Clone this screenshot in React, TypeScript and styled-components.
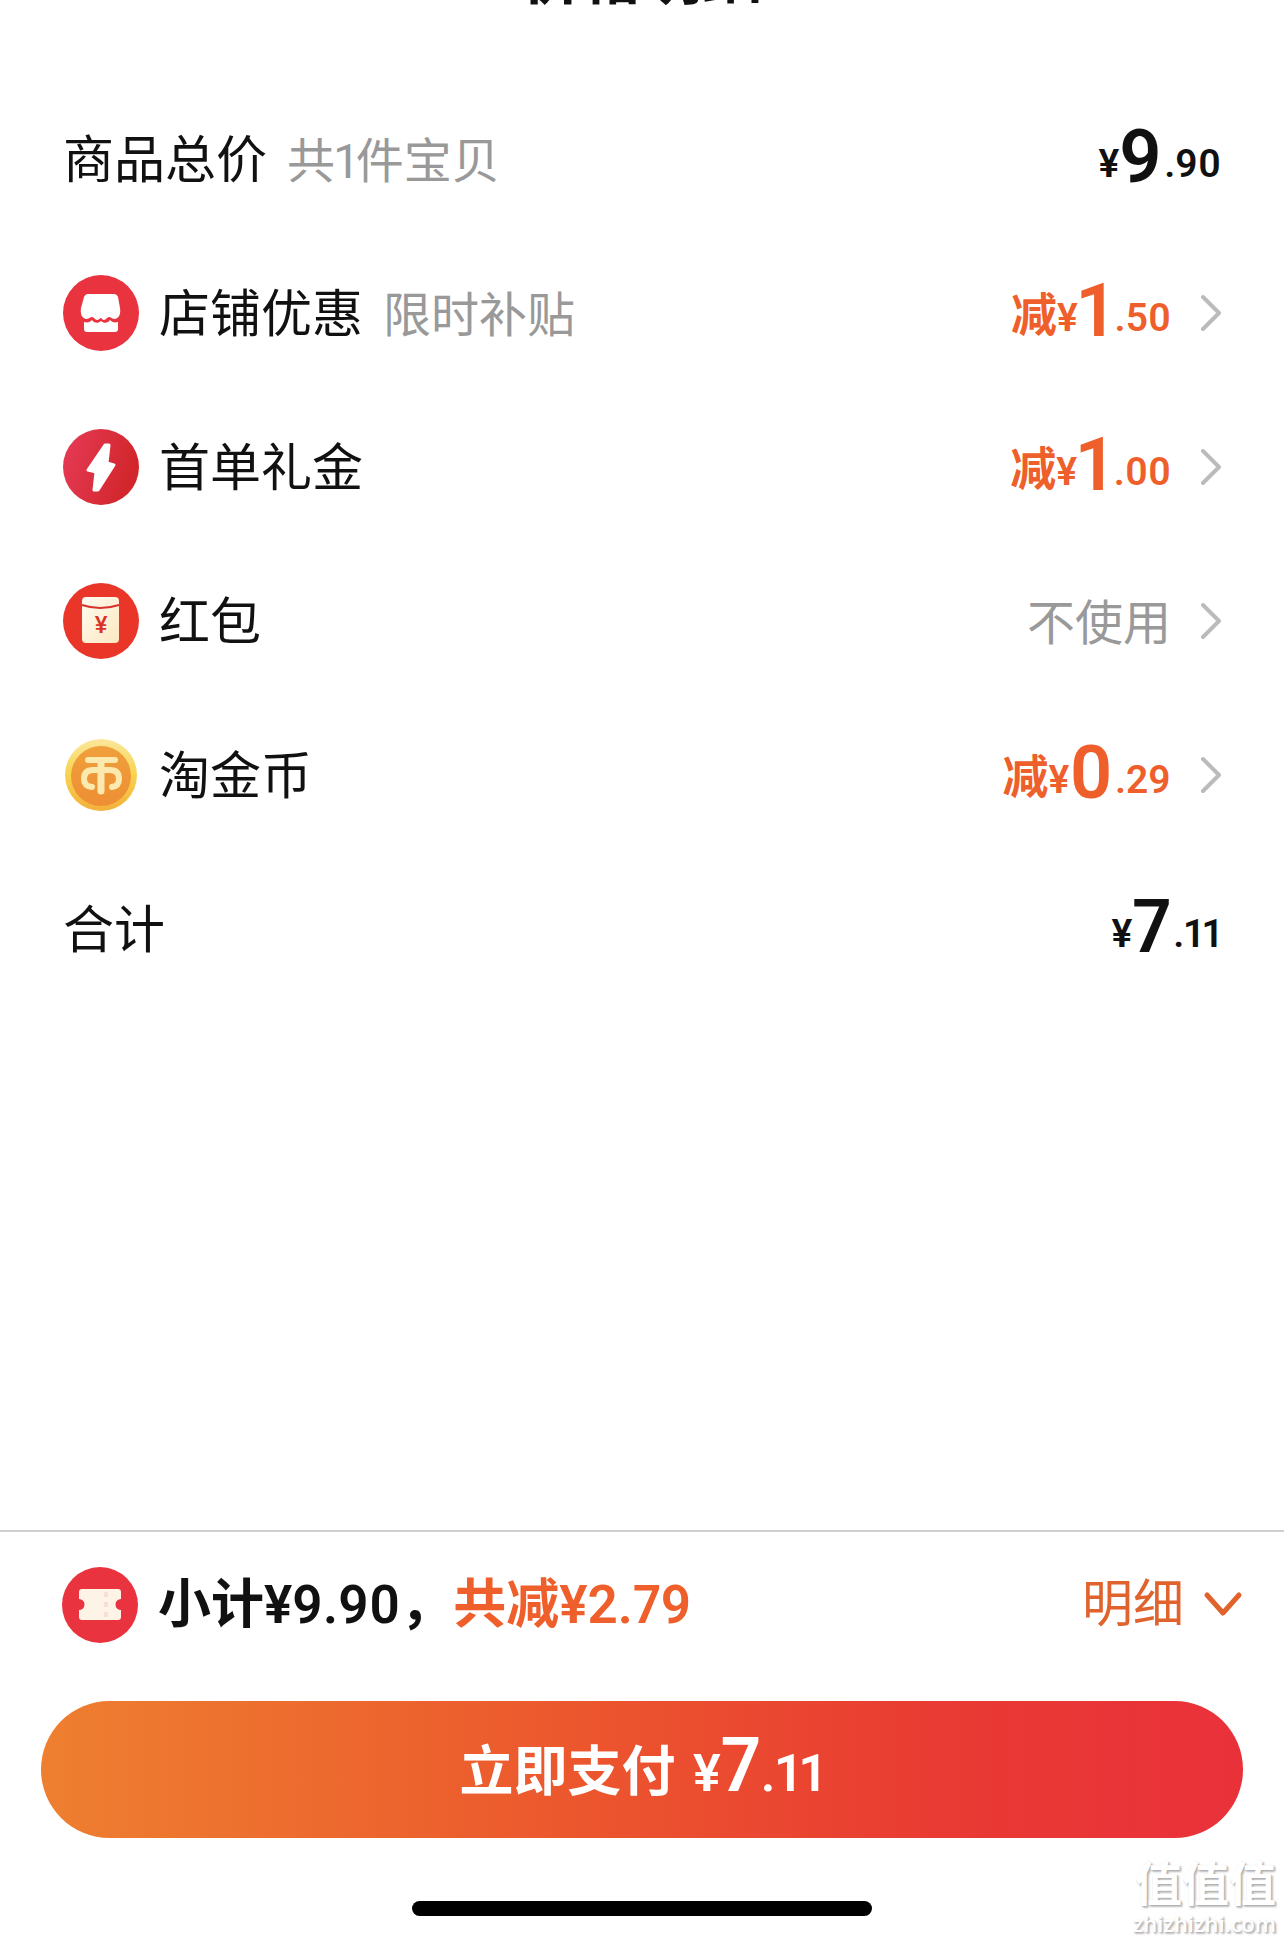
import React from "react";
import styled, { createGlobalStyle } from "styled-components";

const GlobalStyle = createGlobalStyle`
  * { box-sizing: border-box; }
  body {
    margin: 0;
    background: #fff;
    color: #111;
    font-family: Roboto, "Noto Sans CJK SC", sans-serif;
    font-variant-numeric: proportional-nums;
  }
  button {
    margin: 0;
    padding: 0;
    border: 0;
    background: none;
    color: inherit;
    font: inherit;
    font-variant-numeric: inherit;
    cursor: pointer;
  }
`;

const Page = styled.div`
  position: relative;
  display: flex;
  flex-direction: column;
  min-height: 100vh;
  overflow: hidden;
`;

const Header = styled.header`
  margin-top: -51px;
  padding-bottom: 73px;
  text-align: center;
`;

const Title = styled.h1`
  margin: 0;
  font-size: 60px;
  line-height: 60px;
  font-weight: 700;
`;

const List = styled.ul`
  flex: 1;
  margin: 0;
  padding: 0 63px;
  list-style: none;
`;

const Row = styled.div`
  display: flex;
  align-items: center;
  width: 100%;
  height: 154px;
  text-align: left;
`;

const Label = styled.span`
  padding-top: 4px;
  font-size: 51px;
  line-height: 60px;
`;

const Note = styled.span`
  margin-left: 20px;
  padding-top: 6px;
  color: #999;
  font-size: 48px;
  line-height: 60px;
`;

const Value = styled.span<{ $tone: "ink" | "sale" }>`
  margin-left: auto;
  padding-top: 2px;
  color: ${(p) => (p.$tone === "sale" ? "#ee5f2b" : "#111")};
  font-size: 39px;
  font-weight: 600;
  line-height: 60px;
  white-space: nowrap;
`;

const Muted = styled(Note)`
  margin-left: auto;
`;

const Cut = styled.span`
  font-size: 46px;
  font-weight: 700;
`;

const Whole = styled.span`
  margin-right: 2px;
  font-size: 74px;
  line-height: 60px;
  vertical-align: -5px;
`;

const Badge = styled.svg`
  flex: none;
  width: 76px;
  height: 76px;
  margin-right: 20px;
`;

const Arrow = styled.svg`
  flex: none;
  width: 22px;
  height: 38px;
  margin-left: 28px;
`;

const Footer = styled.footer`
  display: flex;
  flex-direction: column;
  padding: 0 41px 24px;
  border-top: 2px solid #cfd1cf;
  margin-top: 40px;
`;

const Summary = styled.div`
  display: flex;
  align-items: center;
  height: 145px;
  margin-bottom: 24px;
  padding-left: 21px;
`;

const Subtotal = styled.span`
  font-size: 53px;
  line-height: 60px;
  font-weight: 700;
`;

const Amount = styled.span`
  font-weight: 600;
`;

const Saved = styled.span`
  color: #ee5f2b;
`;

const Details = styled.button`
  display: flex;
  align-items: center;
  gap: 19px;
  margin-left: auto;
  color: #e0622c;
  font-size: 51px;
  line-height: 60px;
`;

const PayButton = styled.button`
  height: 137px;
  border-radius: 69px;
  background: linear-gradient(90deg, #ee7f30 0%, #ec592d 42%, #e93a33 75%, #e9313a 100%);
  color: #fff;
  font-size: 54px;
  line-height: 60px;
  font-weight: 700;
`;

const PayAmount = styled.span`
  margin-left: 4px;
  font-size: 52px;
  font-weight: 600;
`;

const PayWhole = styled.span`
  font-size: 76px;
  line-height: 60px;
`;

const HomeBar = styled.div`
  align-self: center;
  width: 460px;
  max-width: 40%;
  height: 15px;
  margin-top: 63px;
  border-radius: 8px;
  background: #000;
`;

const Watermark = styled.div`
  position: absolute;
  right: 8px;
  bottom: 2px;
  color: #fff;
  text-align: right;
  text-shadow: 1px 1px 2px #aaa, 2px 2px 2px #ccc;
  font-family: "Noto Sans CJK SC", sans-serif;
`;

const MarkName = styled.div`
  font-size: 47px;
  font-weight: 700;
  line-height: 54px;
`;

const MarkSite = styled.div`
  font-family: "Open Sans", sans-serif;
  font-size: 22px;
  font-weight: 600;
  line-height: 30px;
`;

const ShopIcon = () => (
  <Badge viewBox="0 0 76 76" aria-hidden="true">
    <circle cx="38" cy="38" r="38" fill="#e93440" />
    <path
      d="M25 19h26c2 0 3 1 4 3l2 11c1 6-1 10-5 11-3 0-4-2-6-2s-3 3-5 3-2-2-3-2-2 2-4 2-3-3-5-3-3 2-6 2c-4-1-6-5-5-11l3-11c1-2 2-3 4-3z"
      fill="#fff"
    />
    <path
      d="M21 47c4 1 6 0 8-2 2 3 6 4 9 1 3 3 7 2 9-1 2 2 4 3 8 2v7c0 2-1 3-3 3H24c-2 0-3-1-3-3z"
      fill="#fff"
    />
  </Badge>
);

const BoltIcon = () => (
  <Badge viewBox="0 0 76 76" aria-hidden="true">
    <defs>
      <linearGradient id="bolt" x1="0" y1="0" x2="1" y2="0.3">
        <stop offset="0" stopColor="#e63b57" />
        <stop offset="1" stopColor="#d2262c" />
      </linearGradient>
    </defs>
    <circle cx="38" cy="38" r="38" fill="url(#bolt)" />
    <path
      d="M42 16h4l-2 18 7 2-16 25h-4l2-18-8-2z"
      fill="#fff"
      stroke="#fff"
      strokeWidth="3"
      strokeLinejoin="round"
    />
  </Badge>
);

const EnvelopeIcon = () => (
  <Badge viewBox="0 0 76 76" aria-hidden="true">
    <defs>
      <linearGradient id="envelope" x1="0" y1="0" x2="1" y2="1">
        <stop offset="0" stopColor="#fffaf0" />
        <stop offset="1" stopColor="#fbe8c0" />
      </linearGradient>
    </defs>
    <circle cx="38" cy="38" r="38" fill="#e93629" />
    <rect x="19" y="14" width="37" height="46" rx="4" fill="url(#envelope)" />
    <path d="M19 22q18 6 37 0" fill="none" stroke="#d8342c" strokeWidth="2" />
    <text x="38" y="50" textAnchor="middle" fontSize="24" fontWeight="500" fill="#d8342c">
      ¥
    </text>
  </Badge>
);

const CoinIcon = () => (
  <Badge viewBox="0 0 76 76" aria-hidden="true">
    <defs>
      <linearGradient id="rim" x1="0" y1="0" x2="0" y2="1">
        <stop offset="0" stopColor="#fbe79c" />
        <stop offset="0.5" stopColor="#f8d34e" />
        <stop offset="1" stopColor="#f2b03a" />
      </linearGradient>
      <linearGradient id="face" x1="0" y1="0" x2="0" y2="1">
        <stop offset="0" stopColor="#efa03c" />
        <stop offset="1" stopColor="#ee8e34" />
      </linearGradient>
    </defs>
    <circle cx="38" cy="38" r="36" fill="url(#rim)" />
    <circle cx="38" cy="39" r="30" fill="url(#face)" />
    <g fill="none" stroke="#fce9ae" strokeWidth="6" strokeLinecap="round" strokeLinejoin="round">
      <path d="M25 23h27" />
      <path d="M38 24v30" strokeWidth="7" />
      <path d="M29 50q-8-1-8-8 0-9 9-9h17q9 0 9 9 0 7-7 8" />
    </g>
  </Badge>
);

const CouponIcon = () => (
  <Badge viewBox="0 0 76 76" aria-hidden="true">
    <circle cx="38" cy="38" r="38" fill="#e93440" />
    <path
      d="M20 22h36c2 0 3 1 3 3v7a5 5 0 0 0 0 11v7c0 2-1 3-3 3H20c-2 0-3-1-3-3v-7a5 5 0 0 0 0-11v-7c0-2 1-3 3-3z"
      fill="#fdf3e6"
    />
    <path d="M44 25v26" stroke="#f8dfd4" strokeWidth="4" strokeDasharray="5 5" />
  </Badge>
);

const ArrowRight = () => (
  <Arrow viewBox="0 0 22 38" aria-hidden="true">
    <path
      d="M4 3l16 16L4 35"
      fill="none"
      stroke="#bbb"
      strokeWidth="4"
      strokeLinecap="round"
      strokeLinejoin="round"
    />
  </Arrow>
);

const DownIcon = styled.svg`
  width: 40px;
  height: 28px;
`;

type PriceProps = { whole: string; cents: string; cut?: boolean };

const Price = ({ whole, cents, cut = false }: PriceProps) => (
  <Value $tone={cut ? "sale" : "ink"}>
    {cut && <Cut>减</Cut>}¥<Whole>{whole}</Whole>.{cents}
  </Value>
);

const discounts = [
  { name: "店铺优惠", note: "限时补贴", Icon: ShopIcon, whole: "1", cents: "50" },
  { name: "首单礼金", Icon: BoltIcon, whole: "1", cents: "00" },
  { name: "红包", Icon: EnvelopeIcon },
  { name: "淘金币", Icon: CoinIcon, whole: "0", cents: "29" },
];

export default function App() {
  return (
    <Page>
      <GlobalStyle />
      <Header>
        <Title>价格明细</Title>
      </Header>
      <List>
        <li>
          <Row>
            <Label>商品总价</Label>
            <Note>共1件宝贝</Note>
            <Price whole="9" cents="90" />
          </Row>
        </li>
        {discounts.map(({ name, note, Icon, whole, cents }) => (
          <li key={name}>
            <Row as="button" type="button">
              <Icon />
              <Label>{name}</Label>
              {note && <Note>{note}</Note>}
              {whole && cents ? (
                <Price whole={whole} cents={cents} cut />
              ) : (
                <Muted>不使用</Muted>
              )}
              <ArrowRight />
            </Row>
          </li>
        ))}
        <li>
          <Row>
            <Label>合计</Label>
            <Price whole="7" cents="11" />
          </Row>
        </li>
      </List>
      <Footer>
        <Summary>
          <CouponIcon />
          <Subtotal>
            小计<Amount>¥9.90</Amount>，
            <Saved>
              共减<Amount>¥2.79</Amount>
            </Saved>
          </Subtotal>
          <Details type="button">
            明细
            <DownIcon viewBox="0 0 40 28" aria-hidden="true">
              <path
                d="M4 4l16 18L36 4"
                fill="none"
                stroke="currentColor"
                strokeWidth="5"
                strokeLinecap="round"
                strokeLinejoin="round"
              />
            </DownIcon>
          </Details>
        </Summary>
        <PayButton type="button">
          立即支付{" "}
          <PayAmount>
            ¥<PayWhole>7</PayWhole>.11
          </PayAmount>
        </PayButton>
        <HomeBar />
      </Footer>
      <Watermark>
        <MarkName>值值值</MarkName>
        <MarkSite>zhizhizhi.com</MarkSite>
      </Watermark>
    </Page>
  );
}
